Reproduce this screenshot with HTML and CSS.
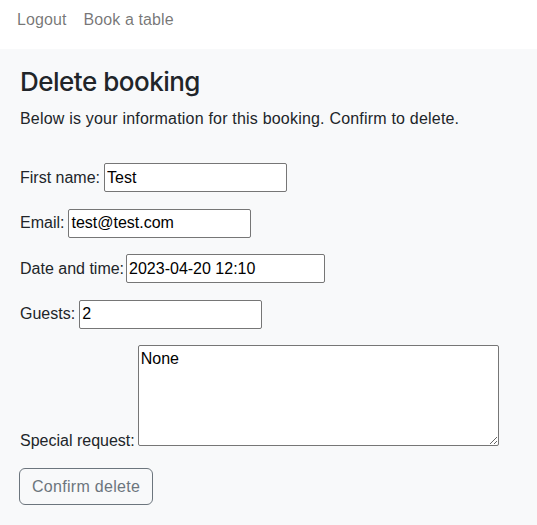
FILE: index.html
```html
<!DOCTYPE html>
<html lang="en">
<head>
<meta charset="utf-8">
<title>Delete booking</title>
<link rel="stylesheet" href="styles.css">
</head>
<body>
<nav class="navbar">
  <a class="nav-link" href="#">Logout</a>
  <a class="nav-link" href="#">Book a table</a>
</nav>
<main class="content">
  <h2 class="title">Delete booking</h2>
  <p class="lead">Below is your information for this booking. Confirm to delete.</p>
  <form class="form">
    <p class="row"><label>First name:</label><input class="field" type="text" value="Test"></p>
    <p class="row"><label>Email:</label><input class="field" type="text" value="test@test.com"></p>
    <p class="row row-tight"><label>Date and time:</label><input class="field date" type="text" value="2023-04-20 12:10"></p>
    <p class="row"><label>Guests:</label><input class="field" type="text" value="2"></p>
    <p class="row-area"><label class="area-label">Special request:</label><textarea class="area">None</textarea></p>
    <button class="btn" type="button">Confirm delete</button>
  </form>
</main>
</body>
</html>
```
FILE: styles.css
```css
* { box-sizing: border-box; }
html, body { margin: 0; }
body {
  font-family: "Liberation Sans", Arial, sans-serif;
  font-size: 16px;
  line-height: 1.5;
  color: #212529;
  background: #f8f9fa;
  height: 525px;
}
.navbar {
  background: #fff;
  height: 49px;
  display: flex;
  align-items: flex-start;
  padding: 8px 0 0 17px;
  gap: 17px;
}
.nav-link {
  color: rgba(0,0,0,0.55);
  text-decoration: none;
  letter-spacing: 0.1px;
}
.content {
  padding: 17px 20px 20px;
}
.title {
  font-family: Inter, "Liberation Sans", sans-serif;
  font-size: 26px;
  font-weight: 500;
  letter-spacing: -0.5px;
  line-height: 1.2;
  margin: 0 0 10px;
}
.lead {
  margin: 0 0 32px;
  letter-spacing: 0.2px;
}
.form { margin: 0; }
.row {
  display: flex;
  align-items: baseline;
  gap: 4px;
  margin: 0 0 16.5px;
}
.row-tight { gap: 2px; }
.row-area { margin: 0 0 16px; }
.area-label { margin-right: 3px; }
.field, .area {
  font: inherit;
  color: #000;
  background: #fff;
  border: 1px solid #767676;
  border-radius: 2px;
  padding: 1px 2px;
  margin: 0;
}
.field { width: 183px; height: 29px; }
.field.date { width: 199px; }
.area {
  width: 361px;
  height: 101px;
  vertical-align: baseline;
  resize: vertical;
}
.btn {
  font: inherit;
  letter-spacing: 0.3px;
  color: #6c757d;
  background: transparent;
  border: 1px solid #6c757d;
  border-radius: 6px;
  padding: 6px 12px;
  height: 37px;
  margin: -1px 0 0 -1px;
}
```
